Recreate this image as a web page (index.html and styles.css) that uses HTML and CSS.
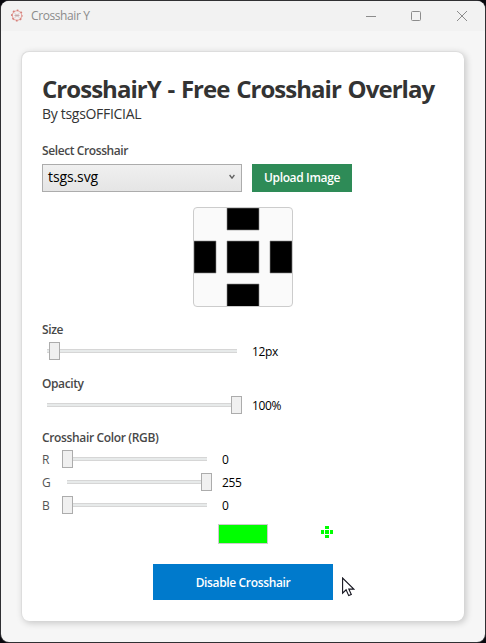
FILE: index.html
```
<!DOCTYPE html>
<html lang="en">
<head>
<meta charset="utf-8">
<title>Crosshair Y</title>
<link rel="stylesheet" href="styles.css">
</head>
<body>
<div class="window">
  <header class="titlebar">
    <svg class="app-icon" width="14" height="14" viewBox="0 0 14 14" fill="none">
      <circle cx="7" cy="6.5" r="4.7" stroke="#e8aaa5" stroke-width="1.1"/>
      <circle cx="7" cy="6.5" r="5.2" stroke="#d5827c" stroke-width="1.6" stroke-dasharray="1.7 2.384" stroke-dashoffset=".85"/>
      <path d="M5 4.5l4 4M9 4.5l-4 4M4.5 6.5h5" stroke="#c5a5a5" stroke-width=".9"/>
    </svg>
    <span class="app-name">Crosshair Y</span>
    <svg class="controls" width="104" height="12" viewBox="0 0 104 12" fill="none" stroke="#8c8c8c">
      <path d="M0 6.5h10"/>
      <rect x="45.5" y="1.5" width="9" height="9" rx="1"/>
      <path d="M91 1l10 10M101 1L91 11"/>
    </svg>
  </header>
  <main class="card">
    <h1 class="title">CrosshairY - Free Crosshair Overlay</h1>
    <p class="author">By tsgsOFFICIAL</p>
    <div class="label label-select">Select Crosshair</div>
    <div class="picker">
      <div class="select"><span class="select-text">tsgs.svg</span>
        <svg width="6" height="6" viewBox="0 0 6 6" fill="none" stroke="#606060" stroke-width="1.3"><path d="M.6 1L3 4.2 5.4 1"/></svg>
      </div>
      <button class="upload"><span class="upload-text">Upload Image</span></button>
    </div>
    <div class="preview">
      <svg width="98" height="98" viewBox="0 0 98 98" stroke="#8c8c8c" stroke-width=".6">
        <path d="M33 0h32v22H33zM0 33h22v32H0zM33 33h32v32H33zM76 33h22v32H76zM33 76h32v23H33z"/>
      </svg>
    </div>
    <div class="label label-size">Size</div>
    <div class="row">
      <div class="slider wide"><i class="thumb size-thumb"></i></div><span class="value">12px</span>
    </div>
    <div class="label label-opacity">Opacity</div>
    <div class="row">
      <div class="slider wide"><i class="thumb end"></i></div><span class="value">100%</span>
    </div>
    <div class="label label-color">Crosshair Color (RGB)</div>
    <div class="channels">
      <div class="row"><span class="channel">R</span><div class="slider"><i class="thumb"></i></div><span class="value">0</span></div>
      <div class="row"><span class="channel">G</span><div class="slider"><i class="thumb end"></i></div><span class="value">255</span></div>
      <div class="row"><span class="channel">B</span><div class="slider"><i class="thumb"></i></div><span class="value">0</span></div>
    </div>
    <div class="result">
      <div class="swatch"></div>
      <svg width="12" height="12" viewBox="0 0 12 12" fill="#00ff00"><path d="M4 0h4v3H4zM0 4h3v4H0zM4 4h4v4H4zM9 4h3v4H9zM4 9h4v3H4z"/></svg>
    </div>
    <button class="toggle"><span class="toggle-text">Disable Crosshair</span></button>
  </main>
</div>
<svg class="cursor" width="13" height="20" viewBox="0 0 13 20"><path d="M.6 1v15.2l3.5-3.4 2.6 5.8 2.6-1.1-2.5-5.4h5z" fill="#fff" stroke="#15151f" stroke-width="1.1"/></svg>
</body>
</html>
```
FILE: styles.css
```
* { box-sizing: border-box; }
body {
  margin: 0;
  height: 643px;
  padding: 1px;
  overflow: hidden;
  background: #303033;
  font-family: "Open Sans", "Noto Sans", sans-serif;
  color: #333;
}
.window {
  height: 641px;
  border-radius: 8px;
  overflow: hidden;
  background: #f6f6f6;
  box-shadow: 0 0 0 1px #303033, 0 0 0 12px #08080d;
}
.titlebar {
  height: 30px;
  padding: 0 15px 1px 9px;
  display: flex;
  align-items: center;
  background: #f2f2f2;
}
.app-name {
  margin-left: 7px;
  font-size: 12px;
  letter-spacing: -.4px;
  line-height: 28px;
  color: #8b8b8b;
}
.controls { margin-left: auto; }
.card {
  width: 443px;
  height: 570px;
  margin: 20px 0 0 20px;
  padding: 21px 20px 0;
  border: 1px solid #ddd;
  border-width: 1px 0 0 1px;
  border-radius: 8px;
  background: #fff;
  box-shadow: 2px 2px 7px rgba(0, 0, 0, .2);
}
.title {
  margin: 0;
  font-size: 24px;
  line-height: 32px;
  font-weight: 700;
  letter-spacing: -.96px;
  word-spacing: 1.4px;
  white-space: nowrap;
}
.author {
  margin: 0;
  font-size: 14px;
  line-height: 18px;
  letter-spacing: -.3px;
}
.label {
  height: 16px;
  font-size: 12px;
  line-height: 16px;
  font-weight: 600;
  letter-spacing: -.4px;
  color: #484848;
}
.label-select { margin-top: 20px; }
.picker { display: flex; gap: 10px; margin-top: 5px; }
.select {
  width: 200px;
  height: 28px;
  display: flex;
  justify-content: space-between;
  align-items: center;
  padding: 0 6px 2px 5px;
  border: 1px solid #acacac;
  background: linear-gradient(#f0f0f0, #e5e5e5);
  color: #000;
  font-size: 14px;
  letter-spacing: -.1px;
  line-height: 20px;
}
button {
  display: block;
  padding: 0;
  border: 0;
  color: #fff;
  font: 600 12px/18px "Open Sans", "Noto Sans", sans-serif;
  letter-spacing: -.35px;
}
.upload { width: 100px; height: 28px; background: #2e8b57; }
.preview {
  width: 100px;
  height: 100px;
  margin: 15px auto 0 151px;
  overflow: hidden;
  border: 1px solid #ccc;
  border-radius: 4px;
  background: #fafafa;
}
.preview svg { display: block; margin-top: -.5px; overflow: visible; }
.label-size { margin: 15px 0 4px; }
.label-opacity { margin: 16px 0 4px; }
.label-color { margin: 16px 0 4px; letter-spacing: -.35px; }
.row { height: 18px; display: flex; align-items: center; }
.slider {
  width: 150px;
  height: 18px;
  padding: 0;
  display: flex;
  background: linear-gradient(#d6d6d6, #d6d6d6) 5px 7px / 140px 4px no-repeat;
  background-image: linear-gradient(#d6d6d6 1px, #e7eaea 1px, #e7eaea 3px, #d6d6d6 3px);
}
.wide { width: 200px; background-size: 190px 4px; }
.thumb {
  width: 11px;
  height: 18px;
  border: 1px solid #acacac;
  background: #f0f0f0;
}
.size-thumb { margin-left: 7px; }
.end { margin-left: auto; }
.value {
  margin-left: 10px;
  padding-top: 2px;
  font-size: 12px;
  line-height: 16px;
  letter-spacing: -.35px;
  color: #000;
}
.channel {
  width: 20px;
  padding-top: 2px;
  font-size: 12px;
  line-height: 16px;
  color: #555;
}
.channels { display: grid; gap: 5px; }
.result {
  display: flex;
  align-items: center;
  margin: 10px 0 0 176px;
  gap: 53px;
}
.result svg { margin-bottom: 4px; }
.swatch { width: 50px; height: 20px; border: 1px solid #ccc; background: #0f0; }
.toggle {
  width: 180px;
  height: 36px;
  margin: 20px 0 0 111px;
  padding-top: 2px;
  background: #007acc;
}
.cursor { position: absolute; left: 342px; top: 577px; }
```
